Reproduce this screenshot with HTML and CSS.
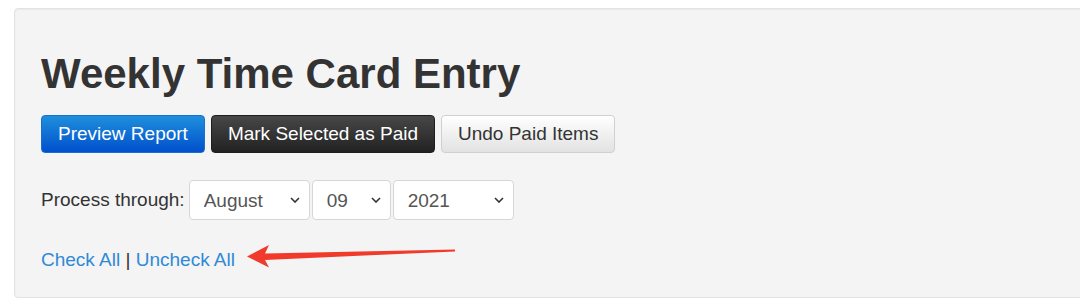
FILE: index.html
```html
<!DOCTYPE html>
<html lang="en">
<head>
<meta charset="utf-8">
<title>Weekly Time Card Entry</title>
<link rel="stylesheet" href="styles.css">
</head>
<body>
<div class="well">
  <h1 class="title">Weekly Time Card Entry</h1>
  <div class="btn-row">
    <button class="btn btn-primary" type="button">Preview Report</button>
    <button class="btn btn-dark" type="button">Mark Selected as Paid</button>
    <button class="btn btn-default" type="button">Undo Paid Items</button>
  </div>
  <div class="process-row">
    <label class="process-label" for="month">Process through:</label>
    <span class="select-wrap month">
      <select id="month" class="select"><option>August</option></select>
      <svg class="chev" viewBox="0 0 10 6" width="10" height="6"><path d="M1 1 L5 5 L9 1" fill="none" stroke="#333" stroke-width="1.6"/></svg>
    </span>
    <span class="select-wrap day">
      <select class="select"><option>09</option></select>
      <svg class="chev" viewBox="0 0 10 6" width="10" height="6"><path d="M1 1 L5 5 L9 1" fill="none" stroke="#333" stroke-width="1.6"/></svg>
    </span>
    <span class="select-wrap year">
      <select class="select"><option>2021</option></select>
      <svg class="chev" viewBox="0 0 10 6" width="10" height="6"><path d="M1 1 L5 5 L9 1" fill="none" stroke="#333" stroke-width="1.6"/></svg>
    </span>
  </div>
  <div class="links">
    <a href="#" class="link">Check All</a> | <a href="#" class="link">Uncheck All</a>
  </div>
  <svg class="arrow" width="220" height="30" viewBox="0 0 220 30">
    <polygon points="7,12.5 29,1 25,9.5 215,5.6 215,7.4 25,16 29,23.5" fill="#f03b2c"/>
  </svg>
</div>
</body>
</html>
```

FILE: styles.css
```css
html, body {
  margin: 0;
  padding: 0;
  background: #fff;
  overflow: hidden;
}
body {
  font-family: "Liberation Sans", Arial, sans-serif;
  color: #333;
}
.well {
  position: relative;
  margin: 8px 0 0 14px;
  width: 1100px;
  height: 290px;
  box-sizing: border-box;
  background: #f4f4f4;
  border: 1px solid #e2e2e2;
  border-radius: 4px;
  box-shadow: inset 0 1px 2px rgba(0,0,0,.05);
  padding: 42px 26px 0 26px;
}
.title {
  margin: 0;
  font-size: 42px;
  font-weight: bold;
  line-height: 46px;
  color: #333;
}
.btn-row {
  display: flex;
  gap: 6px;
  margin-top: 18px;
}
.btn {
  font-family: "Liberation Sans", Arial, sans-serif;
  font-size: 19px;
  height: 38px;
  padding: 0 16px;
  border-radius: 4px;
  border: 1px solid transparent;
  cursor: pointer;
}
.btn-primary {
  color: #fff;
  background: linear-gradient(#1f8fdd, #0050cc);
  border-color: #1a6fcc;
}
.btn-dark {
  color: #fff;
  background: linear-gradient(#474747, #222);
  border-color: #1e1e1e;
}
.btn-default {
  color: #333;
  background: linear-gradient(#fff, #e2e2e2);
  border-color: #d0d0d0;
}
.process-row {
  display: flex;
  align-items: center;
  margin-top: 27px;
  height: 40px;
}
.process-label {
  font-size: 19px;
  color: #333;
  margin-right: 4px;
}
.select-wrap {
  position: relative;
  display: inline-block;
  margin-right: 2px;
}
.select {
  -webkit-appearance: none;
  appearance: none;
  font-family: "Liberation Sans", Arial, sans-serif;
  font-size: 19px;
  color: #555;
  background: #fff;
  border: 1px solid #d6d6d6;
  border-radius: 4px;
  height: 40px;
  padding: 0 14px;
  box-sizing: border-box;
}
.month .select { width: 121px; }
.day .select { width: 79px; }
.year .select { width: 121px; }
.chev {
  position: absolute;
  right: 10px;
  top: 17px;
  pointer-events: none;
}
.links {
  margin-top: 27px;
  font-size: 19px;
  line-height: 26px;
  color: #333;
}
.link {
  color: #2f8ad6;
  text-decoration: none;
}
.arrow {
  position: absolute;
  left: 225px;
  top: 235px;
}
```
